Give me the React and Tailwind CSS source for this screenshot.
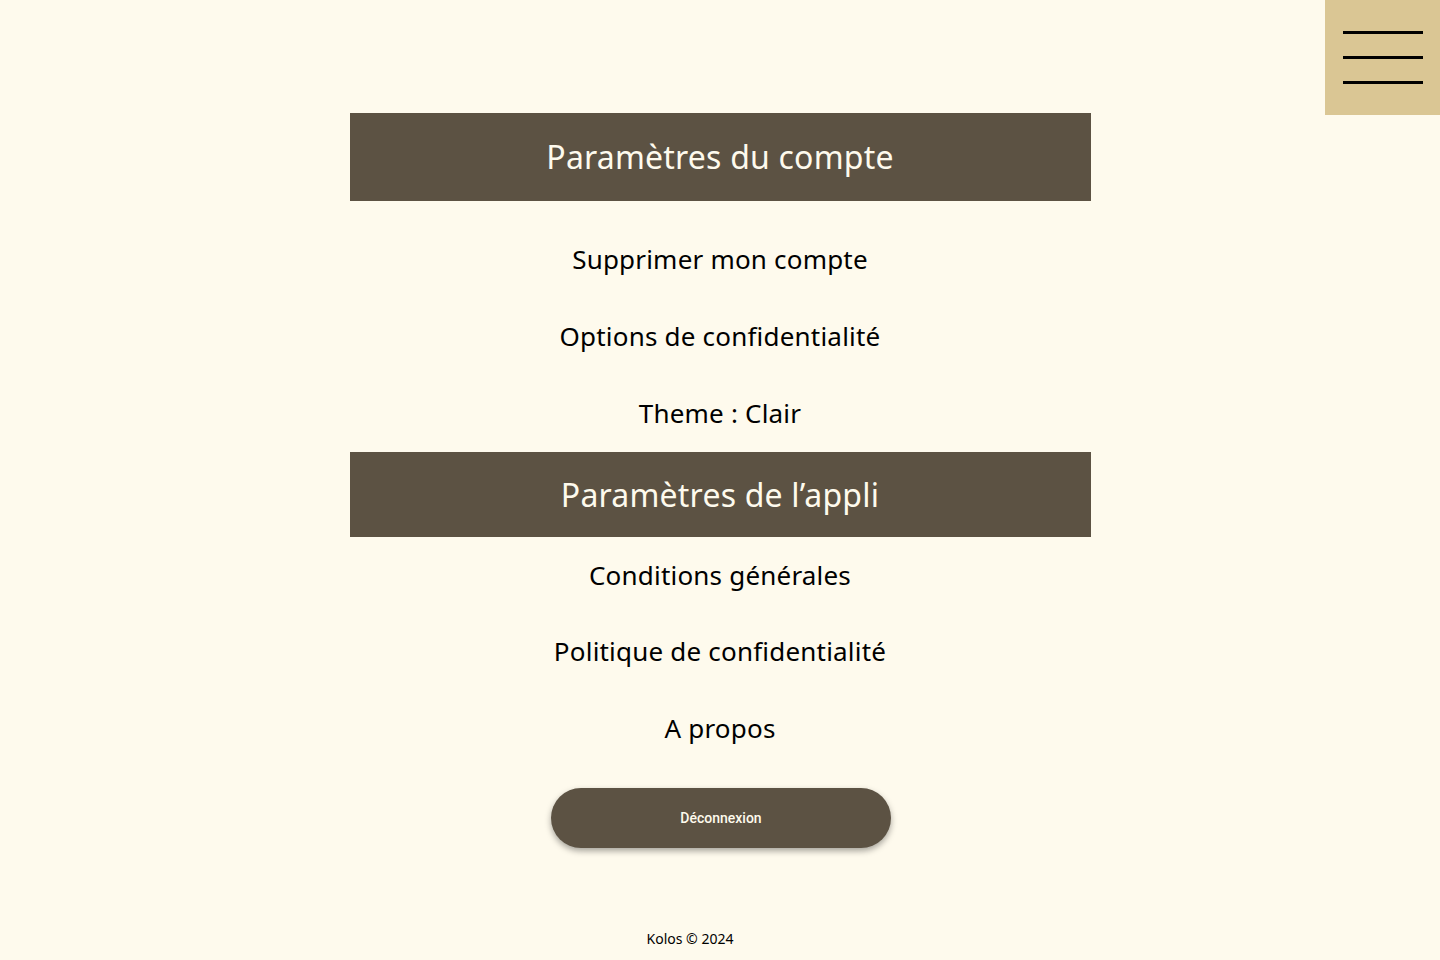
export default function App() {
  const font = { fontFamily: '"Noto Sans", "Open Sans", sans-serif' };
  return (
    <div className="min-h-[960px] bg-[#fefaed] relative" style={font}>
      <button className="absolute right-0 top-0 w-[115px] h-[115px] bg-[#dac694] flex flex-col items-center justify-center gap-[22px]">
        <span className="block w-[80px] h-[3px] bg-black" />
        <span className="block w-[80px] h-[3px] bg-black" />
        <span className="block w-[80px] h-[3px] bg-black" />
      </button>
      <div className="w-[741px] mx-auto pt-[113px] flex flex-col items-center">
        <div className="w-full h-[88px] bg-[#5c5243] flex items-center justify-center text-[#fefaed] text-[32px] tracking-[0.2px]">
          Paramètres du compte
        </div>
        <div className="w-full mt-[20px] flex flex-col text-black text-[26px] tracking-[0.2px]">
          <div className="h-[77px] flex items-center justify-center">Supprimer mon compte</div>
          <div className="h-[77px] flex items-center justify-center">Options de confidentialité</div>
          <div className="h-[77px] flex items-center justify-center">Theme : Clair</div>
        </div>
        <div className="w-full h-[85px] bg-[#5c5243] flex items-center justify-center text-[#fefaed] text-[32px] tracking-[0.2px]">
          Paramètres de l’appli
        </div>
        <div className="w-full flex flex-col text-black text-[26px] tracking-[0.2px]">
          <div className="h-[76px] flex items-center justify-center">Conditions générales</div>
          <div className="h-[77px] flex items-center justify-center">Politique de confidentialité</div>
          <div className="h-[77px] flex items-center justify-center">A propos</div>
        </div>
        <button
          className="mt-[21px] ml-[2px] w-[340px] h-[60px] rounded-full bg-[#5c5243] text-[#fefaed] text-[14px] font-medium shadow-[0_3px_6px_rgba(0,0,0,0.35)]"
          style={{ fontFamily: 'Roboto, sans-serif' }}
        >
          Déconnexion
        </button>
      </div>
      <div className="mt-[81px] w-[741px] mx-auto flex justify-center">
        <span className="text-[14px] text-black leading-[20px] -translate-x-[30px]">Kolos © 2024</span>
      </div>
    </div>
  );
}
